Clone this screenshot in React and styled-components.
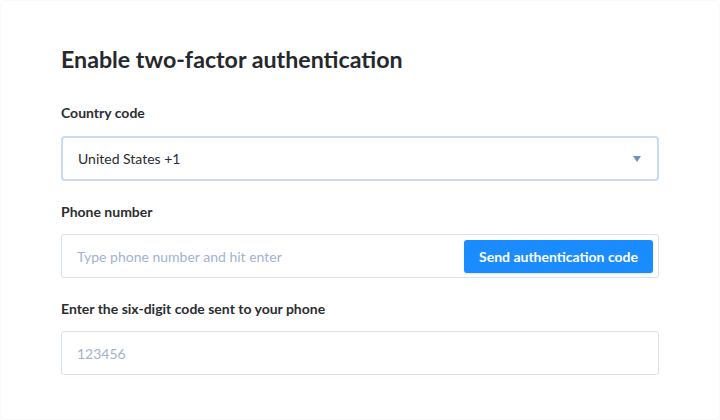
import React from "react";
import styled, { createGlobalStyle } from "styled-components";

const Global = createGlobalStyle`
  html, body { margin: 0; padding: 0; background: #ffffff; }
  body { font-family: Lato, "Open Sans", sans-serif; color: #2b2d31; }
  * { box-sizing: border-box; }
`;

const Card = styled.div`
  width: 720px;
  height: 420px;
  border: 1px solid #fafafb;
  border-radius: 4px;
  padding: 43px 60px 0 60px;
  display: flex;
  flex-direction: column;
`;

const Title = styled.h1`
  margin: 0 0 29px 0;
  font-size: 23.2px;
  line-height: 30px;
  font-weight: 700;
  color: #26282c;
`;

const Field = styled.div`
  display: flex;
  flex-direction: column;
  gap: ${(p) => p.$gap || 12}px;
  margin-bottom: 21px;
`;

const Label = styled.label`
  font-size: 14px;
  line-height: 20px;
  font-weight: 700;
  color: #2b2d31;
`;

const Select = styled.div`
  height: 45px;
  border: 2px solid #c9dbf5;
  border-radius: 4px;
  display: flex;
  align-items: center;
  justify-content: space-between;
  padding: 0 16px 0 15px;
  font-size: 14px;
  color: #2b2d31;
`;

const Arrow = styled.span`
  width: 0;
  height: 0;
  border-left: 4px solid transparent;
  border-right: 4px solid transparent;
  border-top: 6px solid #6f8fbd;
`;

const InputBox = styled.div`
  height: 44px;
  border: 1px solid #d6e2f3;
  border-radius: 3px;
  display: flex;
  align-items: center;
  padding: 0 5px 0 15px;
`;

const Placeholder = styled.span`
  flex: 1;
  font-size: 14px;
  color: #a2b3d0;
`;

const Button = styled.button`
  height: 33px;
  padding: 0 15px;
  border: none;
  border-radius: 3px;
  background: #1a8cff;
  color: #ffffff;
  font-family: Lato, "Open Sans", sans-serif;
  font-weight: 700;
  font-size: 14px;
  box-shadow: 0 1px 2px rgba(0, 0, 0, 0.12);
`;

export default function App() {
  return (
    <>
      <Global />
      <Card>
        <Title>Enable two-factor authentication</Title>
        <Field $gap={13}>
          <Label>Country code</Label>
          <Select>
            <span>United States +1</span>
            <Arrow />
          </Select>
        </Field>
        <Field>
          <Label>Phone number</Label>
          <InputBox>
            <Placeholder>Type phone number and hit enter</Placeholder>
            <Button>Send authentication code</Button>
          </InputBox>
        </Field>
        <Field>
          <Label>Enter the six-digit code sent to your phone</Label>
          <InputBox>
            <Placeholder>123456</Placeholder>
          </InputBox>
        </Field>
      </Card>
    </>
  );
}
